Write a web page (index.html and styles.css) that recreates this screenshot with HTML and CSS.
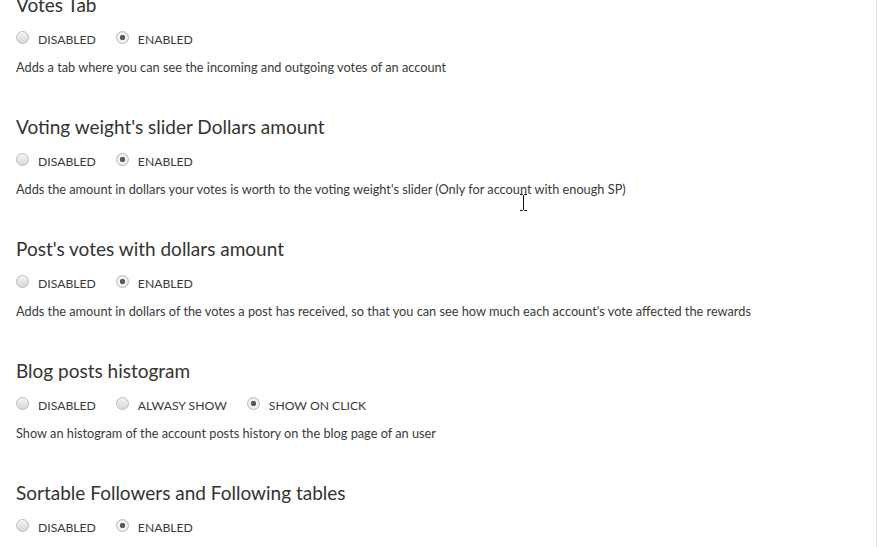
FILE: index.html
```html
<!DOCTYPE html>
<html>
<head>
    <meta charset="UTF-8">
    <title>Settings</title>
    <link rel="stylesheet" href="styles.css">
</head>
<body>
    <div class="page">
        <div class="settings">
            <div class="setting">
                <h2>Votes Tab</h2>
                <div class="options">
                    <label><input type="radio" name="votesTab"> Disabled</label>
                    <label><input type="radio" name="votesTab" checked> Enabled</label>
                </div>
                <p>Adds a tab where you can see the incoming and outgoing votes of an account</p>
            </div>
            <div class="setting">
                <h2>Voting weight's slider Dollars amount</h2>
                <div class="options">
                    <label><input type="radio" name="sliderDollars"> Disabled</label>
                    <label><input type="radio" name="sliderDollars" checked> Enabled</label>
                </div>
                <p>Adds the amount in dollars your votes is worth to the voting weight's slider (Only for account with enough SP)</p>
            </div>
            <div class="setting">
                <h2>Post's votes with dollars amount</h2>
                <div class="options">
                    <label><input type="radio" name="postVotes"> Disabled</label>
                    <label><input type="radio" name="postVotes" checked> Enabled</label>
                </div>
                <p>Adds the amount in dollars of the votes a post has received, so that you can see how much each account's vote affected the rewards</p>
            </div>
            <div class="setting">
                <h2>Blog posts histogram</h2>
                <div class="options">
                    <label><input type="radio" name="histogram"> Disabled</label>
                    <label><input type="radio" name="histogram"> Alwasy show</label>
                    <label><input type="radio" name="histogram" checked> Show on click</label>
                </div>
                <p>Show an histogram of the account posts history on the blog page of an user</p>
            </div>
            <div class="setting">
                <h2>Sortable Followers and Following tables</h2>
                <div class="options">
                    <label><input type="radio" name="sortable"> Disabled</label>
                    <label><input type="radio" name="sortable" checked> Enabled</label>
                </div>
            </div>
        </div>
        <!-- mouse cursor caught in the screenshot -->
        <svg class="cursor" width="9" height="17" viewBox="0 0 9 17">
            <path d="M1 0.5h2.5l1 1 1-1h2.5M4.5 1.5v14M1 16.5h2.5l1-1 1 1h2.5" fill="none" stroke="#111" stroke-width="1"/>
        </svg>
    </div>
</body>
</html>
```

FILE: styles.css
```css
body {
    margin: 0;
    background-color: #FFFFFF;
    font-family: Lato, "Open Sans", sans-serif;
    color: #3A3A3A;
    overflow: hidden;
}
.page {
    position: relative;
    height: 547px;
    border-right: 1px solid #E4E4E4;
    overflow: hidden;
}
.settings {
    margin-top: -7px;
    padding-left: 16px;
}
.setting {
    margin-bottom: 39px;
}
h2 {
    margin: 0;
    font-size: 19px;
    font-weight: normal;
    line-height: 24px;
    color: #333333;
}
.options {
    display: flex;
    gap: 20px;
    margin-top: 12px;
    height: 20px;
    align-items: center;
}
label {
    display: flex;
    align-items: center;
    gap: 9px;
    font-size: 12.2px;
    text-transform: uppercase;
    color: #3A3A3A;
}
input[type="radio"] {
    appearance: none;
    -webkit-appearance: none;
    margin: 0;
    width: 13px;
    height: 13px;
    border: 1px solid #BBBBBB;
    border-radius: 50%;
    background: linear-gradient(#F4F4F4, #D8D8D8);
    position: relative;
    top: -2px;
}
input[type="radio"]:checked {
    background: radial-gradient(circle, #5A5A5A 0 2.5px, #F6F6F6 3px, #DCDCDC 100%);
}
p {
    margin: 10px 0 0 0;
    font-size: 12.75px;
    line-height: 17px;
    color: #3A3A3A;
}
.cursor {
    position: absolute;
    left: 519px;
    top: 194px;
}
```
